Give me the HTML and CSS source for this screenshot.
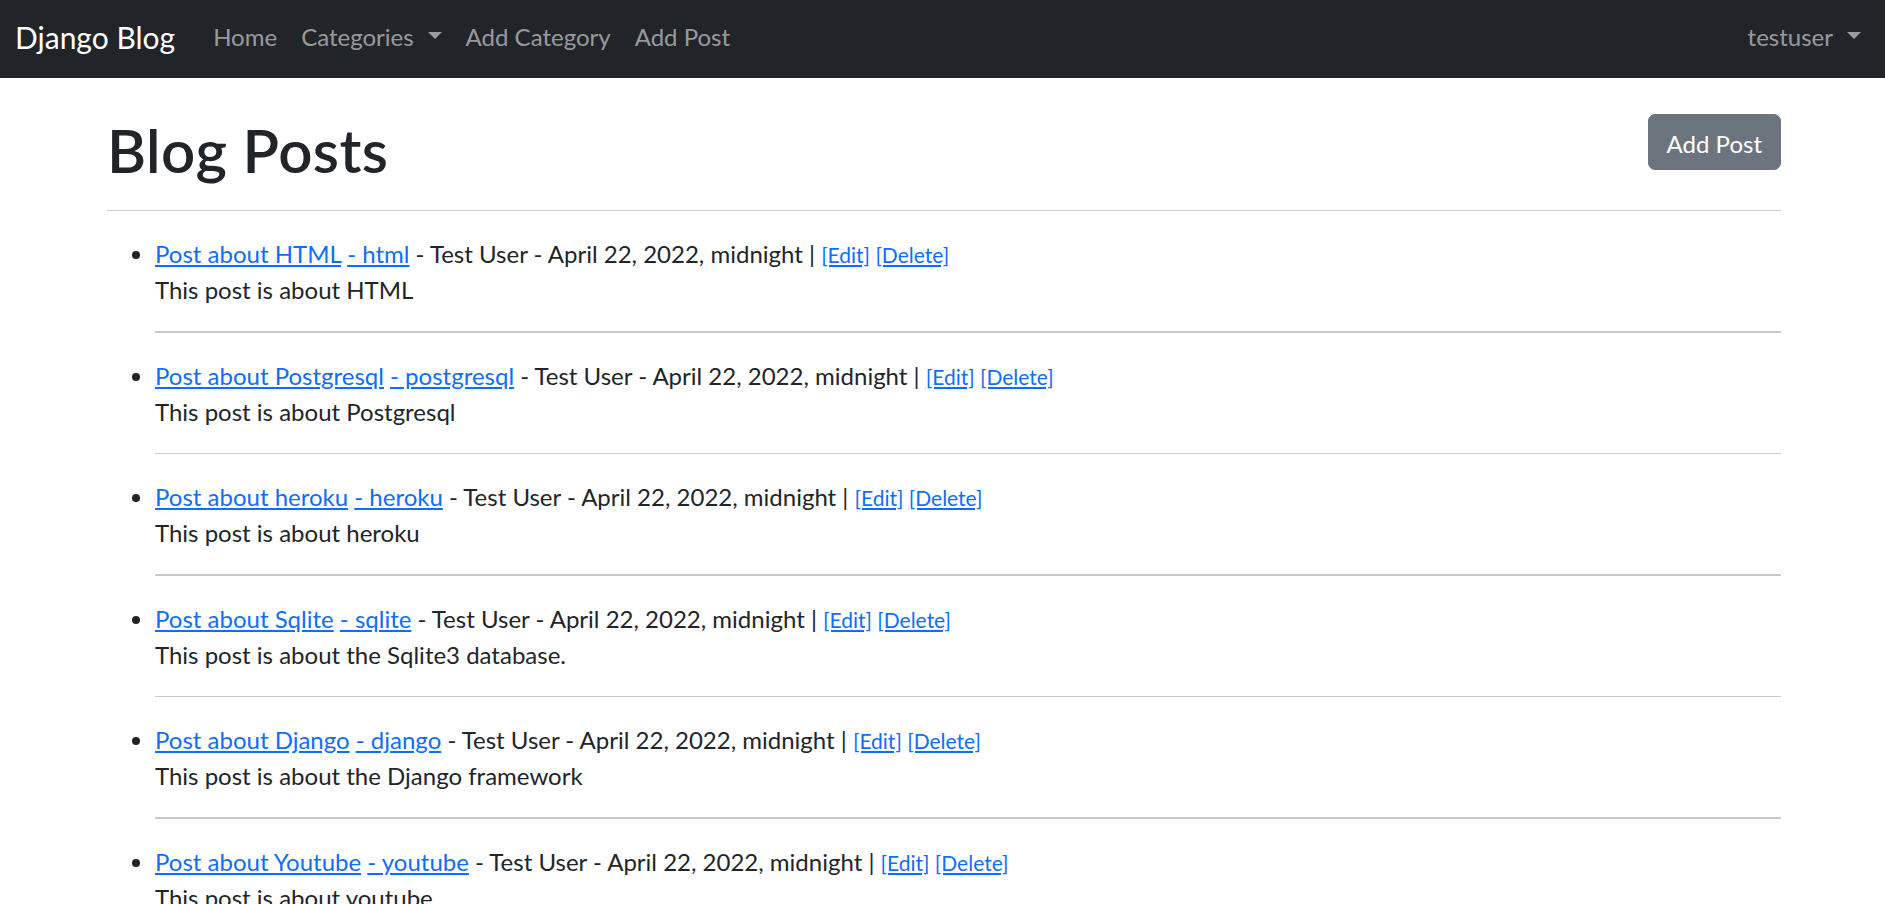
FILE: index.html
```html
<!DOCTYPE html>
<html lang="en">
<head>
<meta charset="utf-8">
<title>Django Blog</title>
<link rel="stylesheet" href="styles.css">
</head>
<body>
<nav class="navbar">
  <a class="brand" href="#">Django Blog</a>
  <ul class="nav">
    <li><a class="nav-link" href="#">Home</a></li>
    <li><a class="nav-link toggle" href="#">Categories</a></li>
    <li><a class="nav-link" href="#">Add Category</a></li>
    <li><a class="nav-link" href="#">Add Post</a></li>
  </ul>
  <ul class="nav nav-right">
    <li><a class="nav-link toggle" href="#">testuser</a></li>
  </ul>
</nav>

<main class="container">
  <div class="page-head">
    <h1 class="title">Blog Posts</h1>
    <a class="btn" href="#">Add Post</a>
  </div>
  <hr class="rule">
  <ul class="posts">
    <li class="post">
      <div class="post-line"><a href="#">Post about HTML</a> <a href="#">- html</a> - Test User - April 22, 2022, midnight | <small class="actions"><a href="#">[Edit]</a> <a href="#">[Delete]</a></small></div>
      <div class="post-desc">This post is about HTML</div>
      <hr class="sep">
    </li>
    <li class="post">
      <div class="post-line"><a href="#">Post about Postgresql</a> <a href="#">- postgresql</a> - Test User - April 22, 2022, midnight | <small class="actions"><a href="#">[Edit]</a> <a href="#">[Delete]</a></small></div>
      <div class="post-desc">This post is about Postgresql</div>
      <hr class="sep">
    </li>
    <li class="post">
      <div class="post-line"><a href="#">Post about heroku</a> <a href="#">- heroku</a> - Test User - April 22, 2022, midnight | <small class="actions"><a href="#">[Edit]</a> <a href="#">[Delete]</a></small></div>
      <div class="post-desc">This post is about heroku</div>
      <hr class="sep">
    </li>
    <li class="post">
      <div class="post-line"><a href="#">Post about Sqlite</a> <a href="#">- sqlite</a> - Test User - April 22, 2022, midnight | <small class="actions"><a href="#">[Edit]</a> <a href="#">[Delete]</a></small></div>
      <div class="post-desc">This post is about the Sqlite3 database.</div>
      <hr class="sep">
    </li>
    <li class="post">
      <div class="post-line"><a href="#">Post about Django</a> <a href="#">- django</a> - Test User - April 22, 2022, midnight | <small class="actions"><a href="#">[Edit]</a> <a href="#">[Delete]</a></small></div>
      <div class="post-desc">This post is about the Django framework</div>
      <hr class="sep">
    </li>
    <li class="post">
      <div class="post-line"><a href="#">Post about Youtube</a> <a href="#">- youtube</a> - Test User - April 22, 2022, midnight | <small class="actions"><a href="#">[Edit]</a> <a href="#">[Delete]</a></small></div>
      <div class="post-desc">This post is about youtube</div>
      <hr class="sep">
    </li>
  </ul>
</main>
</body>
</html>
```
FILE: styles.css
```css
* { box-sizing: border-box; }
html, body { margin: 0; padding: 0; }
body {
  font-family: Lato, "Open Sans", sans-serif;
  font-size: 24px;
  line-height: 1.5;
  color: #212529;
  background: #fff;
}
a { color: #0d6efd; text-decoration: underline; }

/* navbar */
.navbar {
  display: flex;
  align-items: center;
  height: 78px;
  padding: 0 12px 4px 15px;
  background: #212529;
}
.brand {
  font-size: 30px;
  line-height: 45px;
  color: #fff;
  text-decoration: none;
  margin-right: 26px;
}
.nav {
  display: flex;
  list-style: none;
  margin: 0;
  padding: 0;
}
.nav-right { margin-left: auto; }
.nav-link {
  display: block;
  padding: 0 12px;
  line-height: 36px;
  color: rgba(255, 255, 255, 0.55);
  text-decoration: none;
}
.toggle::after {
  content: "";
  display: inline-block;
  margin-left: 14px;
  vertical-align: 7px;
  border-top: 7.2px solid;
  border-left: 7.2px solid transparent;
  border-right: 7.2px solid transparent;
  border-bottom: 0;
}

/* main */
.container {
  padding: 0 104px 0 107px;
}
.page-head {
  display: flex;
  justify-content: space-between;
  align-items: flex-start;
  margin-top: 36px;
}
.title {
  margin: 0;
  font-size: 60px;
  font-weight: 600;
  line-height: 72px;
  letter-spacing: 0.4px;
}
.btn {
  display: inline-block;
  padding: 11px 18px 7px;
  border: 1px solid #6c757d;
  border-radius: 7px;
  background: #6c757d;
  color: #fff;
  text-decoration: none;
  line-height: 36px;
}
.rule {
  margin: 23.5px 0 24px;
  border: 0;
  height: 1.5px;
  background: #c8c9ca;
}
.posts {
  margin: 0;
  padding-left: 48px;
}
.post-line, .post-desc { line-height: 36px; }
.post-line { padding-top: 1px; height: 37px; }
.post-desc { height: 35px; }
.actions { font-size: 21px; line-height: 1; }
.sep {
  margin: 24px 0;
  border: 0;
  height: 1.5px;
  background: #c8c9ca;
}
```
